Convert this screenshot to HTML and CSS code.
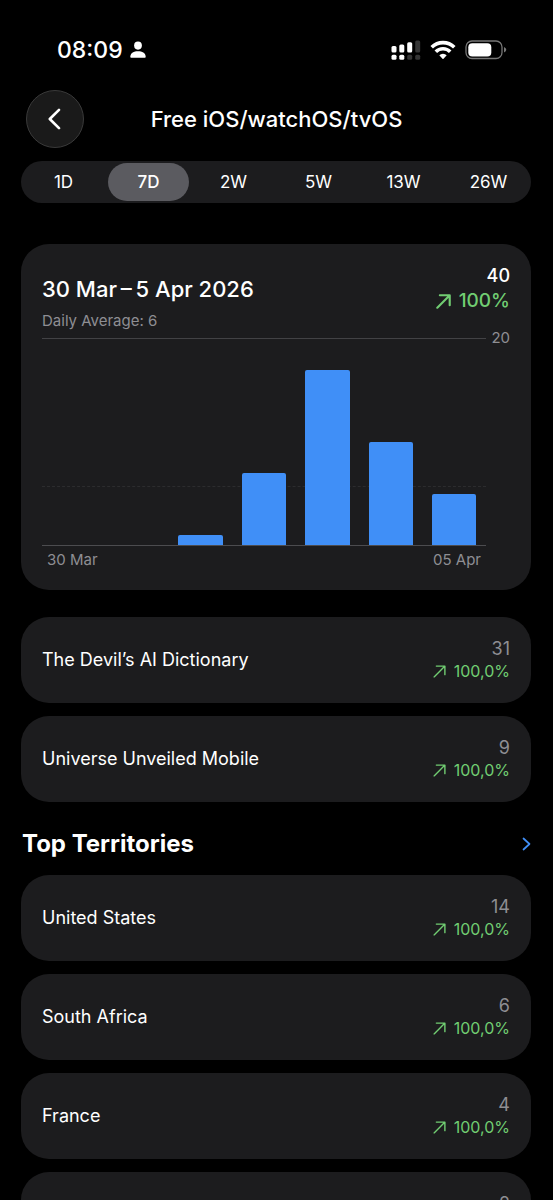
FILE: index.html
```html
<!DOCTYPE html>
<html lang="en">
<head>
<meta charset="utf-8">
<meta name="viewport" content="width=device-width, initial-scale=1">
<title>Free iOS/watchOS/tvOS</title>
<link rel="stylesheet" href="styles.css">
</head>
<body>
<svg width="0" height="0" class="defs" aria-hidden="true">
  <symbol id="arrow-up-right" viewBox="0 0 14 14">
    <path d="M1.2 12.8 12.6 1.4M3.6 1.2H12.8V10.4" fill="none" stroke="currentColor" stroke-linecap="round" stroke-linejoin="round"/>
  </symbol>
</svg>
<div class="screen">
  <div class="status">
    <div class="status-left">
      <span class="time">08:09</span>
      <svg width="16" height="18" viewBox="0 0 16 18" fill="#fff" aria-hidden="true">
        <ellipse cx="8" cy="4.6" rx="3.9" ry="4.1"/>
        <path d="M1.6 16.8C.7 16.8.2 16.3.3 15.400C.7 12 3.700 10.300 8 10.300S15.300 12 15.700 15.400C15.800 16.300 15.300 16.800 14.400 16.800Z"/>
      </svg>
    </div>
    <div class="status-right">
      <svg width="30" height="20" viewBox="0 0 30 20" fill="#fff" aria-hidden="true">
        <rect x="0.500" y="6" width="5" height="6.500" rx="1.500"/>
        <rect x="8.300" y="4.500" width="5" height="8" rx="1.500"/>
        <rect x="16.200" y="2.300" width="5" height="10.200" rx="1.500"/>
        <rect x="24.200" y="0.500" width="5" height="12" rx="1.500" fill="#353535"/>
        <rect x="0.500" y="14.800" width="5" height="5" rx="1.500"/>
        <rect x="8.300" y="14.800" width="5" height="5" rx="1.500"/>
        <rect x="16.200" y="14.800" width="5" height="5" rx="1.500" fill="#353535"/>
        <rect x="24.200" y="14.800" width="5" height="5" rx="1.500" fill="#353535"/>
      </svg>
      <svg width="26" height="20" viewBox="0 0 26 20" aria-hidden="true">
        <g fill="none" stroke="#fff" stroke-width="3.600">
          <path d="M1.700 7.300A16 16 0 0 1 24.300 7.300"/>
          <path d="M5.800 11.800A10.200 10.200 0 0 1 20.200 11.800"/>
        </g>
        <path d="M9.300 15.300A5.300 5.300 0 0 1 16.700 15.300L13.500 18.700Q13 19.200 12.500 18.700Z" fill="#fff"/>
      </svg>
      <svg width="42" height="20" viewBox="0 0 42 20" aria-hidden="true">
        <rect x="1" y="1" width="36" height="17.500" rx="6" fill="none" stroke="#777" stroke-width="1.300"/>
        <rect x="3.300" y="3.200" width="23" height="13.200" rx="4" fill="#fff"/>
        <path d="M39 7Q41.300 8 41.300 9.800T39 12.600Z" fill="#777"/>
      </svg>
    </div>
  </div>

  <header class="nav">
    <button class="back" type="button" aria-label="Back">
      <svg width="14" height="22" viewBox="0 0 14 22" aria-hidden="true"><path d="M12 1.800 2.800 11 12 20.200" fill="none" stroke="#fff" stroke-width="2.600" stroke-linecap="round" stroke-linejoin="round"/></svg>
    </button>
    <h1 class="nav-title">Free iOS/watchOS/tvOS</h1>
  </header>

  <main class="content">
    <div class="segments" role="group" aria-label="Period">
      <button class="segment" type="button" aria-pressed="false">1D</button>
      <button class="segment selected" type="button" aria-pressed="true">7D</button>
      <button class="segment" type="button" aria-pressed="false">2W</button>
      <button class="segment" type="button" aria-pressed="false">5W</button>
      <button class="segment" type="button" aria-pressed="false">13W</button>
      <button class="segment" type="button" aria-pressed="false">26W</button>
    </div>

    <section class="card chart-card">
      <div class="chart-head">
        <div class="chart-titles">
          <h2 class="chart-title">30 Mar&#8201;–&#8201;5 Apr 2026</h2>
          <p class="chart-sub">Daily Average: 6</p>
        </div>
        <div class="totals">
          <span class="total">40</span>
          <span class="total-delta"><svg class="arrow-large" aria-hidden="true"><use href="#arrow-up-right"/></svg>100%</span>
        </div>
      </div>
      <div class="chart">
        <div class="plot">
          <div class="average"></div>
          <div class="bar" style="height:0%"></div>
          <div class="bar" style="height:0%"></div>
          <div class="bar" style="height:5%"></div>
          <div class="bar" style="height:35%"></div>
          <div class="bar" style="height:85%"></div>
          <div class="bar" style="height:50%"></div>
          <div class="bar" style="height:25%"></div>
        </div>
        <span class="axis-max">20</span>
        <div class="dates"><span>30 Mar</span><span>05 Apr</span></div>
      </div>
    </section>

    <ul class="rows">
      <li class="card row"><span class="name">The Devil’s AI Dictionary</span><span class="value">31</span><span class="delta"><svg class="arrow" aria-hidden="true"><use href="#arrow-up-right"/></svg>100,0%</span></li>
      <li class="card row"><span class="name">Universe Unveiled Mobile</span><span class="value">9</span><span class="delta"><svg class="arrow" aria-hidden="true"><use href="#arrow-up-right"/></svg>100,0%</span></li>
    </ul>

    <div class="section-head">
      <h2 class="section-title">Top Territories</h2>
      <a class="more" href="#territories" aria-label="All territories">
        <svg width="9" height="14" viewBox="0 0 9 14" aria-hidden="true"><path d="M1.500 1.500 7.500 7 1.500 12.500" fill="none" stroke="currentColor" stroke-width="1.700" stroke-linecap="round" stroke-linejoin="round"/></svg>
      </a>
    </div>

    <ul class="rows" id="territories">
      <li class="card row"><span class="name">United States</span><span class="value">14</span><span class="delta"><svg class="arrow" aria-hidden="true"><use href="#arrow-up-right"/></svg>100,0%</span></li>
      <li class="card row"><span class="name">South Africa</span><span class="value">6</span><span class="delta"><svg class="arrow" aria-hidden="true"><use href="#arrow-up-right"/></svg>100,0%</span></li>
      <li class="card row"><span class="name">France</span><span class="value">4</span><span class="delta"><svg class="arrow" aria-hidden="true"><use href="#arrow-up-right"/></svg>100,0%</span></li>
      <li class="card row"><span class="name"></span><span class="value">2</span></li>
    </ul>
  </main>
</div>
</body>
</html>
```

FILE: styles.css
```css
* { box-sizing: border-box; }

body {
  margin: 0;
  background: #000;
  color: #fff;
  font-family: Inter, "Noto Sans", sans-serif;
}

h1, h2, p, ul { margin: 0; padding: 0; }
ul { list-style: none; }
button { font: inherit; color: inherit; border: 0; padding: 0; cursor: pointer; }
svg { display: block; flex: none; }
.defs { position: absolute; }

.screen {
  height: 100vh;
  overflow-y: auto;
  scrollbar-width: none;
}

.status {
  display: flex;
  justify-content: space-between;
  padding: 36px 46px 26px 57px;
}
.status-left, .status-right { display: flex; align-items: center; height: 28px; }
.status-left { gap: 7px; }
.status-right { gap: 9px; }
.time { font-size: 23px; font-weight: 500; line-height: 28px; }

.nav {
  display: grid;
  grid-template-columns: 58px 1fr 58px;
  align-items: center;
  padding: 0 26px;
}
.back {
  display: flex;
  align-items: center;
  justify-content: center;
  width: 58px;
  height: 58px;
  padding-right: 3px;
  border: 1px solid #3a3a3a;
  border-radius: 50%;
  background: #1a1a1a;
}
.nav-title {
  font-size: 22px;
  font-weight: 500;
  line-height: 28px;
  text-align: center;
}

.content { padding: 13px 22px 27px 21px; }

.segments {
  display: grid;
  grid-template-columns: repeat(6, 1fr);
  height: 42px;
  padding: 2px 0;
  border-radius: 21px;
  background: #1c1c1e;
}
.segment {
  margin: 0 2px;
  border-radius: 19px;
  background: none;
  font-size: 17px;
}
.segment.selected { background: #5b5b60; font-weight: 500; }

.card { border-radius: 28px; background: #1c1c1e; }

.chart-card { margin: 41px 0 27px; padding: 21px 21px 20px; }
.chart-head { display: flex; justify-content: space-between; margin-bottom: 7px; }
.chart-titles { padding-top: 10px; }
.chart-title { font-size: 22px; font-weight: 500; line-height: 28px; }
.chart-sub { margin-top: 8px; color: #8e8e93; font-size: 15px; line-height: 20px; }
.totals { display: flex; flex-direction: column; align-items: flex-end; }
.total { font-size: 18px; font-weight: 500; line-height: 22px; }
.total-delta {
  display: flex;
  align-items: center;
  gap: 8px;
  color: #71cd72;
  font-size: 19px;
  font-weight: 500;
  line-height: 28px;
}
.arrow-large { width: 15px; height: 15px; stroke-width: 2; }

.chart { display: grid; grid-template-columns: 1fr 24px; }
.plot {
  position: relative;
  display: flex;
  align-items: flex-end;
  justify-content: space-around;
  height: 208px;
  border-top: 1px solid #424245;
  border-bottom: 1px solid #4c4c4f;
}
.average {
  position: absolute;
  left: 0;
  right: 0;
  bottom: 28%;
  border-top: 1px dashed #2c2c2e;
}
.bar {
  position: relative;
  width: 10%;
  border-radius: 2px 2px 0 0;
  background: #408ff7;
}
.axis-max {
  margin-top: -10px;
  color: #8e8e93;
  font-size: 15px;
  line-height: 20px;
  text-align: right;
}
.dates {
  display: flex;
  justify-content: space-between;
  padding: 4px 5px 0;
  color: #8e8e93;
  font-size: 15px;
  line-height: 20px;
}

.rows { display: grid; gap: 13px; }
.row {
  display: grid;
  grid-template-columns: 1fr auto;
  grid-template-rows: 23px 23px;
  align-items: center;
  justify-items: end;
  padding: 20px 21px;
  line-height: 23px;
}
.name { grid-row: 1 / 3; justify-self: start; padding-bottom: 2px; font-size: 18px; }
.value { color: #8e8e93; font-size: 18px; }
.delta {
  display: flex;
  align-items: center;
  gap: 8px;
  grid-column: 2;
  color: #71cd72;
  font-size: 16px;
}
.arrow { width: 13px; height: 13px; stroke-width: 1.5; }

.section-head {
  display: flex;
  align-items: center;
  justify-content: space-between;
  padding: 26px 0 16px 1px;
}
.section-title { font-size: 24px; font-weight: 700; line-height: 31px; }
.more { color: #408ff7; }
```
